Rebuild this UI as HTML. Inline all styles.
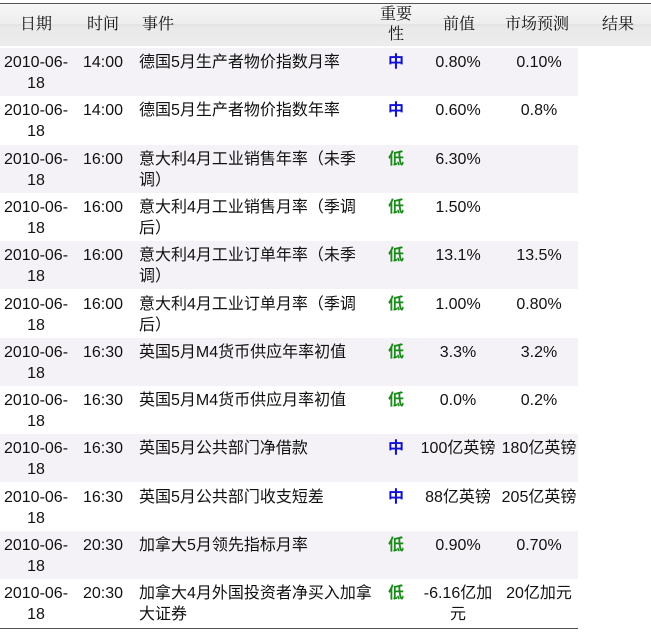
<!DOCTYPE html>
<html><head><meta charset="utf-8"><style>
body{margin:0;width:651px;height:642px;background:#fff;position:relative;overflow:hidden;font-family:"Liberation Sans","Noto Sans CJK SC",sans-serif;font-size:16px;color:#111;}
.hd{position:absolute;left:0;top:3px;width:651px;height:42px;border-top:1px solid #555;background:linear-gradient(#f6f6f6 0,#eeeeee 20px,#dcdcdc 21px,#e9e9e9 22px,#ececec 42px);}
.c{position:absolute;white-space:nowrap;line-height:21px;}
.h{font-family:"Liberation Serif","Noto Serif CJK SC",serif;}
.row{position:absolute;left:0;width:578px;height:48px;}
.s{background:#f4f2f6;}
.m{color:#1010d0;font-weight:bold;}
.l{color:#1a8a1a;font-weight:bold;}
.bl{position:absolute;left:0;top:628px;width:578px;height:1px;background:#555;}
</style></head><body>
<div class="hd"></div>
<div class="c h" style="left:0;width:72px;top:14px;text-align:center">日期</div>
<div class="c h" style="left:72px;width:62px;top:14px;text-align:center">时间</div>
<div class="c h" style="left:142px;top:14px">事件</div>
<div class="c h" style="left:370px;width:52px;top:5px;text-align:center;line-height:20px">重要<br>性</div>
<div class="c h" style="left:422px;width:74px;top:14px;text-align:center">前值</div>
<div class="c h" style="left:496px;width:82px;top:14px;text-align:center">市场预测</div>
<div class="c h" style="left:578px;width:80px;top:14px;text-align:center">结果</div>
<div id="rows"></div>
<div class="bl"></div>
<script>
var d=[
["14:00","德国5月生产者物价指数月率","m","0.80%","0.10%"],
["14:00","德国5月生产者物价指数年率","m","0.60%","0.8%"],
["16:00","意大利4月工业销售年率（未季<br>调）","l","6.30%",""],
["16:00","意大利4月工业销售月率（季调<br>后）","l","1.50%",""],
["16:00","意大利4月工业订单年率（未季<br>调）","l","13.1%","13.5%"],
["16:00","意大利4月工业订单月率（季调<br>后）","l","1.00%","0.80%"],
["16:30","英国5月M4货币供应年率初值","l","3.3%","3.2%"],
["16:30","英国5月M4货币供应月率初值","l","0.0%","0.2%"],
["16:30","英国5月公共部门净借款","m","100亿英镑","180亿英镑"],
["16:30","英国5月公共部门收支短差","m","88亿英镑","205亿英镑"],
["20:30","加拿大5月领先指标月率","l","0.90%","0.70%"],
["20:30","加拿大4月外国投资者净买入加拿<br>大证券","l","-6.16亿加<br>元","20亿加元"]];
var h="";
for(var i=0;i<d.length;i++){var t=48+i*48.3,y=t+4;var r=d[i];
h+='<div class="row'+(i%2==0?' s':'')+'" style="top:'+t+'px"></div>';
h+='<div class="c" style="left:0;width:72px;top:'+y+'px;text-align:center">2010-06-<br>18</div>';
h+='<div class="c" style="left:72px;width:62px;top:'+y+'px;text-align:center">'+r[0]+'</div>';
h+='<div class="c" style="left:139px;top:'+y+'px">'+r[1]+'</div>';
h+='<div class="c '+r[2]+'" style="left:370px;width:52px;top:'+y+'px;text-align:center">'+(r[2]=="m"?"中":"低")+'</div>';
h+='<div class="c" style="left:420px;width:76px;top:'+y+'px;text-align:center">'+r[3]+'</div>';
h+='<div class="c" style="left:498px;width:82px;top:'+y+'px;text-align:center">'+r[4]+'</div>';}
document.getElementById("rows").innerHTML=h;
</script>
</body></html>
